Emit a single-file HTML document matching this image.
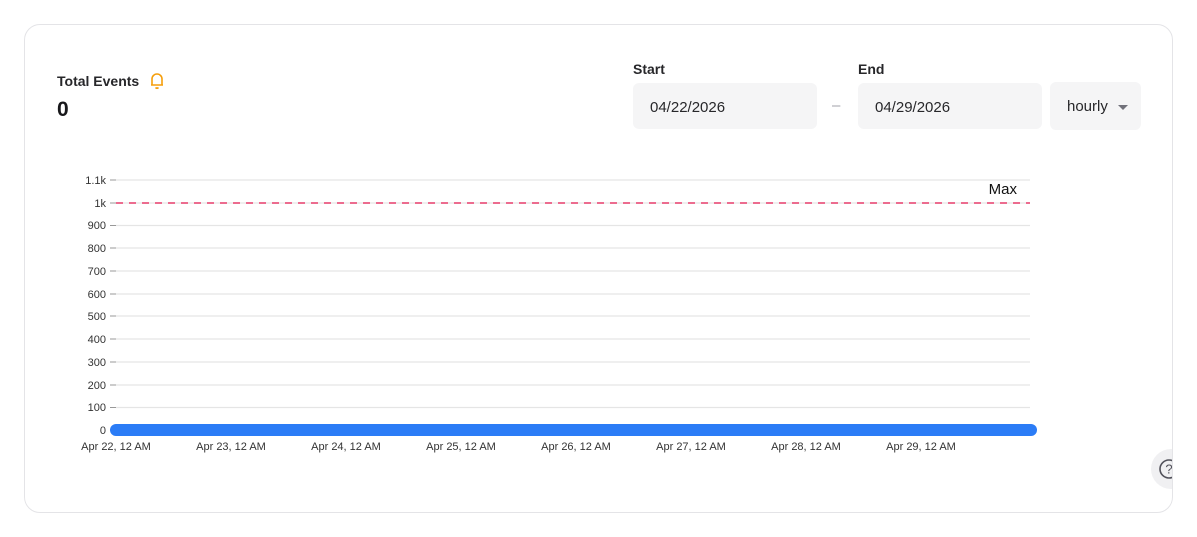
<!DOCTYPE html>
<html><head><style>
body{margin:0;width:1197px;height:537px;background:#fff;font-family:"Liberation Sans",Arial,sans-serif;overflow:hidden;position:relative}
.card{position:absolute;left:24px;top:24px;width:1149px;height:489px;border:1px solid #e4e4e7;border-radius:16px;overflow:hidden;box-sizing:border-box}
.abs{position:absolute}
.lbl{font-size:14px;font-weight:bold;color:#27272a}
.inp{background:#f5f5f6;border-radius:6px;font-size:15px;color:#27272a;box-sizing:border-box;padding-left:17px;line-height:49px;height:46px}
</style></head><body>
<div class="card">
<div class="abs" style="left:32px;top:48px;font-size:14px;font-weight:bold;color:#27272a">Total Events</div>
<svg class="abs" style="left:124px;top:47px" width="16" height="18" viewBox="0 0 16 18"><path d="M3 13 L3 7 A5 5 0 0 1 13 7 L13 13 Z M2 13 H14 M6.5 15.5 Q8 17 9.5 15.5" fill="none" stroke="#f59e0b" stroke-width="1.6" stroke-linejoin="round"/></svg>
<div class="abs" style="left:32px;top:73px;font-size:21px;font-weight:bold;color:#18181b">0</div>
<div class="abs lbl" style="left:608px;top:36px">Start</div>
<div class="abs lbl" style="left:833px;top:36px">End</div>
<div class="abs inp" style="left:608px;top:58px;width:184px">04/22/2026</div>
<div class="abs" style="left:807px;top:72px;font-size:15px;color:#a1a1aa">–</div>
<div class="abs inp" style="left:833px;top:58px;width:184px">04/29/2026</div>
<div class="abs inp" style="left:1025px;top:57px;width:91px;height:48px;line-height:50px;padding-left:17px">hourly <span style="display:inline-block;width:0;height:0;border-left:5px solid transparent;border-right:5px solid transparent;border-top:5px solid #71717a;margin-left:6px;vertical-align:middle"></span></div>
<div class="abs" style="left:1126px;top:424px;width:40px;height:40px;border-radius:50%;background:#f0f0f2"></div>
<svg class="abs" style="left:1133px;top:433px" width="22" height="22" viewBox="0 0 22 22"><circle cx="11" cy="11" r="9" fill="none" stroke="#52525b" stroke-width="1.6"/><text x="11" y="15.5" font-size="13" text-anchor="middle" fill="#52525b" font-family="Liberation Sans">?</text></svg>
</div>
<svg class="abs" style="left:0;top:0" width="1197" height="537">
<g font-size="11" fill="#333" text-anchor="end" font-family="Liberation Sans">
<g stroke="#e5e5e5" stroke-width="1.3">
<line x1="116" y1="180" x2="1030" y2="180"/><line x1="116" y1="225.5" x2="1030" y2="225.5"/><line x1="116" y1="248" x2="1030" y2="248"/><line x1="116" y1="271" x2="1030" y2="271"/><line x1="116" y1="294" x2="1030" y2="294"/><line x1="116" y1="316" x2="1030" y2="316"/><line x1="116" y1="339" x2="1030" y2="339"/><line x1="116" y1="362" x2="1030" y2="362"/><line x1="116" y1="385" x2="1030" y2="385"/><line x1="116" y1="407.5" x2="1030" y2="407.5"/><line x1="116" y1="203" x2="1030" y2="203"/>
</g>
<g stroke="#999" stroke-width="1">
<line x1="110" y1="180" x2="116" y2="180"/><line x1="110" y1="203" x2="116" y2="203"/><line x1="110" y1="225.5" x2="116" y2="225.5"/><line x1="110" y1="248" x2="116" y2="248"/><line x1="110" y1="271" x2="116" y2="271"/><line x1="110" y1="294" x2="116" y2="294"/><line x1="110" y1="316" x2="116" y2="316"/><line x1="110" y1="339" x2="116" y2="339"/><line x1="110" y1="362" x2="116" y2="362"/><line x1="110" y1="385" x2="116" y2="385"/><line x1="110" y1="407.5" x2="116" y2="407.5"/>
</g>
<line x1="116" y1="203" x2="1030" y2="203" stroke="#e83e6c" stroke-width="1.5" stroke-dasharray="7,6"/>
<text x="106" y="184">1.1k</text><text x="106" y="207">1k</text><text x="106" y="229">900</text><text x="106" y="252">800</text><text x="106" y="275">700</text><text x="106" y="298">600</text><text x="106" y="320">500</text><text x="106" y="343">400</text><text x="106" y="366">300</text><text x="106" y="389">200</text><text x="106" y="411">100</text><text x="106" y="434">0</text>
<text x="1017" y="194" font-size="15" fill="#111">Max</text>
<line x1="116" y1="430" x2="1031" y2="430" stroke="#2b7cf6" stroke-width="12" stroke-linecap="round"/>
<g text-anchor="middle"><text x="116" y="450">Apr 22, 12 AM</text><text x="231" y="450">Apr 23, 12 AM</text><text x="346" y="450">Apr 24, 12 AM</text><text x="461" y="450">Apr 25, 12 AM</text><text x="576" y="450">Apr 26, 12 AM</text><text x="691" y="450">Apr 27, 12 AM</text><text x="806" y="450">Apr 28, 12 AM</text><text x="921" y="450">Apr 29, 12 AM</text></g>
</g>
</svg>
</body></html>
